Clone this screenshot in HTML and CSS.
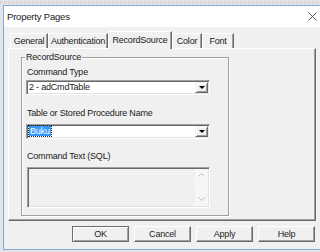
FILE: index.html
```html
<!DOCTYPE html>
<html lang="en">
<head>
    <meta charset="UTF-8">
    <meta name="viewport" content="width=device-width, initial-scale=1.0">
    <title>Property Pages</title>
    <link rel="stylesheet" href="styles.css">
</head>
<body>
    <div class="strip"></div>

    <div class="window">
        <div class="titlebar">
            <span class="title">Property Pages</span>
            <svg class="close" width="9" height="9" viewBox="0 0 9 9">
                <path d="M0.5 0.5 L8.5 8.5 M8.5 0.5 L0.5 8.5" stroke="#444" stroke-width="0.9" fill="none"/>
            </svg>
        </div>

        <div class="dialog">
            <div class="tabs">
                <div class="tab tab-general">General</div>
                <div class="tab tab-auth">Authentication</div>
                <div class="tab tab-active">RecordSource</div>
                <div class="tab tab-color">Color</div>
                <div class="tab tab-font">Font</div>
            </div>

            <div class="page">
                <fieldset class="group">
                    <legend>RecordSource</legend>

                    <div class="label label-first">Command Type</div>
                    <div class="combo">
                        <span class="combo-text">2 - adCmdTable</span>
                        <span class="drop"><span class="arrow"></span></span>
                    </div>

                    <div class="label label-second">Table or Stored Procedure Name</div>
                    <div class="combo combo-second">
                        <span class="combo-text"><span class="selected">Buku</span></span>
                        <span class="drop"><span class="arrow"></span></span>
                    </div>

                    <div class="label label-third">Command Text (SQL)</div>
                    <div class="memo">
                        <div class="memo-body"></div>
                        <div class="scrollbar">
                            <svg width="7" height="4" viewBox="0 0 7 4"><path d="M0.5 3.5 L3.5 0.5 L6.5 3.5" stroke="#bdbdbd" fill="none"/></svg>
                            <svg width="7" height="4" viewBox="0 0 7 4"><path d="M0.5 0.5 L3.5 3.5 L6.5 0.5" stroke="#bdbdbd" fill="none"/></svg>
                        </div>
                    </div>
                </fieldset>
            </div>

            <div class="buttons">
                <div class="btn btn-default">OK</div>
                <div class="btn">Cancel</div>
                <div class="btn">Apply</div>
                <div class="btn">Help</div>
            </div>
        </div>
    </div>
</body>
</html>
```

FILE: styles.css
```css
body {
    margin: 0;
    width: 320px;
    height: 252px;
    overflow: hidden;
    background-color: #e4e4e4;
    font-family: "Liberation Sans", Arial, sans-serif;
    font-size: 9px;
    letter-spacing: -0.2px;
    color: #1a1a1a;
}
.strip {
    height: 5px;
    background-color: #e1e1e1;
    background-image: repeating-linear-gradient(90deg, #b9b9b9 0 1px, transparent 1px 4px);
    background-size: 100% 1px;
    background-position: 0 2px;
    background-repeat: no-repeat;
}
.window {
    margin-left: 3px;
    width: 330px;
    height: 243px;
    border: 1px solid #7ea9d9;
    border-right: none;
    background-color: #f0f0f0;
}
.titlebar {
    height: 21px;
    background-color: #fff;
    display: flex;
    align-items: center;
    justify-content: space-between;
    padding-left: 3px;
    width: 313px;
}
.title {
    font-size: 9.5px;
}
.close {
    margin-right: 3px;
}
.dialog {
    padding-left: 4px;
}
.tabs {
    display: flex;
    align-items: flex-end;
    height: 17px;
    margin-top: 4px;
    padding-left: 2px;
}
.tab {
    box-sizing: border-box;
    height: 15px;
    line-height: 14px;
    text-align: center;
    border-top: 1px solid #fff;
    border-left: 1px solid #fff;
    border-right: 1px solid #696969;
    box-shadow: inset -1px 0 0 #a0a0a0;
}
.tab-general { width: 38px; }
.tab-auth { width: 60px; }
.tab-color { width: 30px; }
.tab-font { width: 32px; }
.tab-active {
    width: 64px;
    height: 18px;
    line-height: 16px;
    margin-bottom: -1px;
    background-color: #f0f0f0;
    position: relative;
    z-index: 1;
}
.page {
    box-sizing: border-box;
    width: 308px;
    height: 173px;
    border-top: 1px solid #fff;
    border-left: 1px solid #fff;
    border-right: 1px solid #696969;
    border-bottom: 1px solid #696969;
    box-shadow: inset -1px -1px 0 #a0a0a0;
    padding: 3px 0 0 12px;
}
.group {
    box-sizing: border-box;
    width: 208px;
    margin: 0;
    padding: 0 0 7px 4px;
    border: 1px solid #a0a0a0;
    box-shadow: 1px 1px 0 #fff, inset 1px 1px 0 #fff;
}
.group legend {
    padding: 0 1px;
    margin-left: -1px;
    line-height: 10px;
    background-color: #f0f0f0;
}
.label {
    line-height: 10px;
    padding-left: 1px;
}
.label-first { margin-top: 5px; }
.label-second { margin-top: 13px; }
.label-third { margin-top: 12px; }
.combo {
    box-sizing: border-box;
    width: 184px;
    height: 15px;
    margin-top: 3px;
    display: flex;
    align-items: stretch;
    background-color: #fff;
    border-top: 1px solid #a0a0a0;
    border-left: 1px solid #a0a0a0;
    border-right: 1px solid #fff;
    border-bottom: 1px solid #fff;
    box-shadow: inset 1px 1px 0 #696969, inset -1px -1px 0 #e3e3e3;
}
.combo-second {
    margin-top: 6px;
}
.combo-text {
    flex: 1;
    padding-left: 2px;
    line-height: 13px;
}
.selected {
    background-color: #3399ff;
    color: #fff;
    padding: 0 1px;
    outline: 1px dotted #222;
}
.drop {
    box-sizing: border-box;
    width: 13px;
    margin: 1px 1px 1px 0;
    display: flex;
    align-items: center;
    justify-content: center;
    background-color: #f0f0f0;
    border-top: 1px solid #f0f0f0;
    border-left: 1px solid #f0f0f0;
    border-right: 1px solid #696969;
    border-bottom: 1px solid #696969;
    box-shadow: inset 1px 1px 0 #fff, inset -1px -1px 0 #a0a0a0;
}
.arrow {
    width: 0;
    height: 0;
    border-left: 3px solid transparent;
    border-right: 3px solid transparent;
    border-top: 3px solid #000;
}
.memo {
    box-sizing: border-box;
    width: 183px;
    height: 41px;
    margin: 6px 0 0 1px;
    display: flex;
    border-top: 1px solid #a0a0a0;
    border-left: 1px solid #a0a0a0;
    border-right: 1px solid #fff;
    border-bottom: 1px solid #fff;
    box-shadow: inset 1px 1px 0 #696969, inset -1px -1px 0 #e3e3e3;
}
.memo-body {
    flex: 1;
}
.scrollbar {
    width: 13px;
    margin: 1px 1px 1px 0;
    background-color: #f6f6f6;
    display: flex;
    flex-direction: column;
    align-items: center;
    justify-content: space-between;
    padding: 4px 0 5px;
}
.buttons {
    width: 308px;
    display: flex;
    justify-content: flex-end;
    gap: 5px;
    padding-right: 1px;
    box-sizing: border-box;
    margin-top: 5px;
}
.btn {
    box-sizing: border-box;
    width: 57px;
    height: 16px;
    line-height: 14px;
    text-align: center;
    border: 1px solid;
    border-color: #fff #696969 #696969 #fff;
    box-shadow: inset -1px -1px 0 #a0a0a0;
}
.btn-default {
    border-color: #6d6d6d;
    box-shadow: inset 1px 1px 0 #fff, inset -1px -1px 0 #a0a0a0;
}
```
